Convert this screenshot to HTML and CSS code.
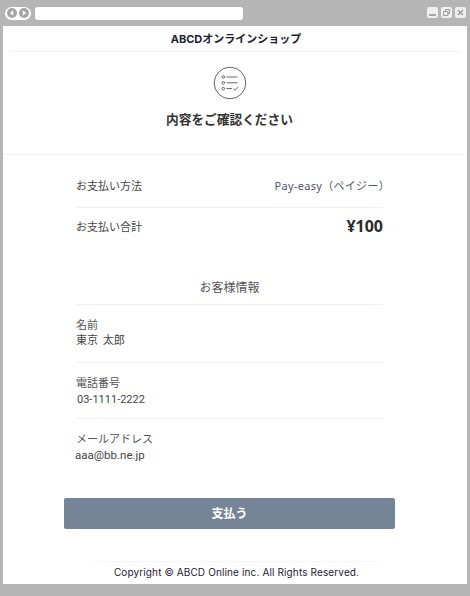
FILE: index.html
```html
<!DOCTYPE html>
<html lang="ja">
<head>
  <meta charset="UTF-8">
  <title>ABCDオンラインショップ</title>
  <link rel="stylesheet" href="styles.css">
</head>
<body>
  <div class="window">
    <div class="titlebar">
      <div class="nav">
        <svg width="12" height="12" viewBox="0 0 12 12"><circle cx="6" cy="6" r="5" fill="#a5a5a5"/><path d="M7.200 3.300 4 6l3.200 2.700z" fill="#fff"/></svg>
        <svg width="12" height="12" viewBox="0 0 12 12"><circle cx="6" cy="6" r="5" fill="#a5a5a5"/><path d="M4.800 3.300 8 6 4.800 8.700z" fill="#fff"/></svg>
      </div>
      <div class="address"></div>
      <div class="controls">
        <div class="control"><svg width="11" height="11" viewBox="0 0 11 11"><path d="M2 8h7" stroke="#8f8f8f" stroke-width="1.5"/></svg></div>
        <div class="control"><svg width="11" height="11" viewBox="0 0 11 11"><path d="M2.500 4.500h4.500v4h-4.500zM4.500 4.500v-2h4v4h-2" fill="none" stroke="#9a9a9a"/></svg></div>
        <div class="control"><svg width="11" height="11" viewBox="0 0 11 11"><path d="M3 3l5 5M8 3l-5 5" stroke="#9a9a9a" stroke-width="1.400"/></svg></div>
      </div>
    </div>

    <div class="page">
      <div class="shop">ABCDオンラインショップ</div>

      <div class="confirm">
        <svg class="confirm-icon" width="34" height="34" viewBox="0 0 34 34" fill="none" stroke="#555" stroke-width="0.900">
          <circle cx="17" cy="17" r="15.800"/>
          <circle cx="10.300" cy="11" r="1.300"/>
          <circle cx="10.300" cy="16.800" r="1.300"/>
          <circle cx="10.300" cy="22.600" r="1.300"/>
          <path d="M13.500 11h11M13.500 16.800h11M13.500 22.600h5.500M20.500 22.600l1.700 1.600 3-3.200"/>
        </svg>
        <h1>内容をご確認ください</h1>
      </div>

      <div class="summary">
        <div class="row row-method">
          <span>お支払い方法</span>
          <span class="method">Pay-easy（ペイジー）</span>
        </div>
        <div class="row row-total">
          <span>お支払い合計</span>
          <span class="total">¥100</span>
        </div>

        <h2>お客様情報</h2>

        <div class="field field-name">
          <div class="label">名前</div>
          <div class="value">東京 太郎</div>
        </div>
        <div class="field field-tel">
          <div class="label">電話番号</div>
          <div class="value">03-1111-2222</div>
        </div>
        <div class="field field-mail">
          <div class="label">メールアドレス</div>
          <div class="value">aaa@bb.ne.jp</div>
        </div>
      </div>

      <button class="pay">支払う</button>

      <div class="copyright">Copyright © ABCD Online inc. All Rights Reserved.</div>
    </div>
  </div>
</body>
</html>
```

FILE: styles.css
```css
html, body {
  margin: 0;
  padding: 0;
}
body {
  font-family: "Noto Sans", "Noto Sans CJK JP", sans-serif;
  color: #444;
  background: #b5b5b5;
}
.window {
  width: 470px;
  height: 596px;
  overflow: hidden;
  background: #b5b5b5;
}
.titlebar {
  height: 26px;
  display: flex;
  align-items: center;
  padding: 0 4px 0 5px;
  box-sizing: border-box;
}
.nav {
  display: flex;
  width: 26px;
  height: 13px;
  justify-content: center;
  align-items: center;
  background: #fff;
  border-radius: 7px;
}
.nav svg {
  display: block;
}
.address {
  width: 208px;
  height: 13px;
  margin-left: 4px;
  background: #fff;
  border-radius: 3px;
}
.controls {
  margin-left: auto;
  margin-bottom: 2px;
  display: flex;
  gap: 3px;
}
.control {
  width: 11px;
  height: 11px;
  background: #efefef;
  border-radius: 2px;
}
.control svg {
  display: block;
}
.page {
  height: 558px;
  margin: 0 3px;
  background: #fff;
  display: flex;
  flex-direction: column;
  align-items: center;
}
.shop {
  width: 450px;
  height: 25px;
  line-height: 26px;
  text-align: center;
  text-indent: 2px;
  font-family: "Inter", "Noto Sans CJK JP", sans-serif;
  font-size: 11px;
  font-weight: 700;
  color: #1d2233;
  border-bottom: 1px solid #f1f2f8;
}
.confirm {
  width: 100%;
  height: 102px;
  display: flex;
  flex-direction: column;
  align-items: center;
  border-bottom: 1px solid #f1f2f8;
}
.confirm-icon {
  display: block;
  margin-top: 14px;
  margin-right: 11px;
}
h1 {
  margin: 9px 11px 0 0;
  font-size: 12.700px;
  line-height: 20px;
  font-weight: 700;
  color: #333;
}
.summary {
  width: 307px;
  margin-right: 11px;
  font-size: 11px;
}
.row {
  display: flex;
  justify-content: space-between;
  align-items: center;
}
.row-method {
  height: 53px;
  padding-top: 8px;
  box-sizing: border-box;
  border-bottom: 1px solid #eef0f6;
}
.row-total {
  height: 38px;
  padding-bottom: 3px;
  box-sizing: border-box;
}
.method {
  font-size: 11px;
  letter-spacing: 0.300px;
  margin-right: -7px;
  color: #4f5666;
}
.total {
  font-size: 16px;
  font-weight: 700;
  color: #2b2b2b;
}
h2 {
  margin: 0;
  height: 59px;
  line-height: 22px;
  padding-top: 31px;
  box-sizing: border-box;
  text-align: center;
  font-size: 12px;
  font-weight: 400;
  color: #555;
  border-bottom: 1px solid #eef0f6;
}
.field {
  box-sizing: border-box;
  padding-top: 12px;
  border-bottom: 1px solid #eef0f6;
}
.field-name {
  height: 58px;
}
.field-tel {
  height: 56px;
}
.field-mail {
  height: 60px;
  border-bottom: none;
}
.label {
  font-size: 11px;
  line-height: 15px;
  color: #555;
}
.value {
  margin-top: 1px;
  font-family: "Roboto", "Noto Sans CJK JP", sans-serif;
  font-size: 11px;
  line-height: 16px;
  color: #444;
}
.field-name .value {
  word-spacing: 2px;
}
.field-tel .value {
  margin-top: 2px;
  padding-left: 1px;
}
.field-mail .value {
  margin-left: -1px;
  font-size: 11.500px;
}
.pay {
  display: block;
  width: 331px;
  height: 31px;
  margin: 19px 11px 0 0;
  padding: 0 0 2px;
  border: none;
  border-radius: 2px;
  background: #768497;
  color: #fff;
  font-family: "Noto Sans CJK JP", sans-serif;
  font-size: 12px;
  font-weight: 700;
}
.copyright {
  width: 283px;
  margin-top: 32px;
  line-height: 20px;
  text-align: center;
  text-indent: 3px;
  font-family: "Inter", "Noto Sans CJK JP", sans-serif;
  font-size: 10px;
  letter-spacing: 0.130px;
  color: #1d2233;
  border-top: 1px solid #f5f5fb;
  white-space: nowrap;
}
```
